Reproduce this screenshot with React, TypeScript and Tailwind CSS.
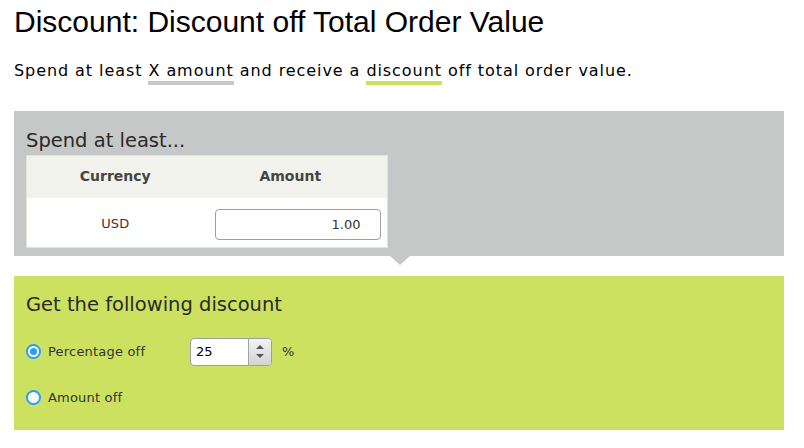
import React from 'react';

const verdana = "font-['Verdana','DejaVu_Sans',sans-serif]";

export default function App() {
  return (
    <div className="w-[804px] h-[448px] bg-white overflow-hidden px-[14px] pt-[4px] text-[#222]">
      <h1 className="font-['Liberation_Sans',Arial,sans-serif] text-[30px] leading-[36px] text-black">
        Discount: Discount off Total Order Value
      </h1>
      <p className={`${verdana} mt-[19px] text-[16px] leading-[24px] tracking-[0.93px] text-black`}>
        Spend at least{' '}
        <span className="border-b-4 border-[#c6c7c6] pb-[1px]">X amount</span> and receive a{' '}
        <span className="border-b-4 border-[#cbe05e] pb-[1px]">discount</span> off total order value.
      </p>

      <div className="relative mt-[28px] w-[770px] bg-[#c6c8c7] px-[12px] pt-[16px] pb-[8px]">
        <h2 className={`${verdana} text-[19.5px] leading-[28px] text-[#2a2a2a]`}>Spend at least...</h2>
        <table className={`${verdana} w-[362px] border border-[#e3e3d8] bg-white text-[13px]`}>
          <thead>
            <tr className="bg-[#f2f2ed] h-[42px]">
              <th className="w-[177px] text-[14px] font-bold text-[#444]">Currency</th>
              <th className="pr-[10px] text-[14px] font-bold text-[#444]">Amount</th>
            </tr>
          </thead>
          <tbody>
            <tr>
              <td className="pt-[3px] text-center text-[#5a2a1a]">USD</td>
              <td className="pl-[11px] pr-[5px] pt-[11px] pb-[7px]">
                <div className="h-[31px] w-[166px] rounded-[4px] border border-[#9aa0a4] bg-white pr-[19px] text-right leading-[29px] text-[#333]">
                  1.00
                </div>
              </td>
            </tr>
          </tbody>
        </table>
        <div className="absolute left-[376px] top-full h-0 w-0 border-l-[10px] border-r-[10px] border-t-[9px] border-l-transparent border-r-transparent border-t-[#c6c8c7]" />
      </div>

      <div className={`${verdana} mt-[20px] h-[154px] w-[770px] bg-[#cce15f] px-[12px] pt-[15px]`}>
        <h2 className="text-[19.5px] leading-[28px] text-[#2a2a2a]">Get the following discount</h2>
        <div className="mt-[19px] flex items-center h-[28px]">
          <span className="flex h-[15px] w-[15px] items-center justify-center rounded-full border-2 border-[#2d9bf0] bg-white">
            <span className="h-[7px] w-[7px] rounded-full bg-[#2d9bf0]" />
          </span>
          <span className="ml-[7px] w-[142px] text-[13px] tracking-[0.2px] text-[#333]">Percentage off</span>
          <div className="flex h-[28px] w-[82px] overflow-hidden rounded-[4px] border border-[#9aa0a4] bg-white">
            <span className="flex-1 pl-[5px] text-[13px] leading-[26px] text-black">25</span>
            <div className="flex w-[23px] flex-col items-center justify-center gap-[5px] border-l border-[#a0a4a8] bg-gradient-to-b from-[#f2f2f2] to-[#d4d4d4]">
              <span className="h-0 w-0 border-l-[4px] border-r-[4px] border-b-[4px] border-l-transparent border-r-transparent border-b-[#555]" />
              <span className="h-0 w-0 border-l-[4px] border-r-[4px] border-t-[4px] border-l-transparent border-r-transparent border-t-[#555]" />
            </div>
          </div>
          <span className="ml-[10px] text-[13px] text-[#333]">%</span>
        </div>
        <div className="mt-[23px] flex items-center h-[18px]">
          <span className="h-[15px] w-[15px] rounded-full border-2 border-[#2d9bf0] bg-white" />
          <span className="ml-[7px] text-[13px] tracking-[0.2px] text-[#333]">Amount off</span>
        </div>
      </div>
    </div>
  );
}
